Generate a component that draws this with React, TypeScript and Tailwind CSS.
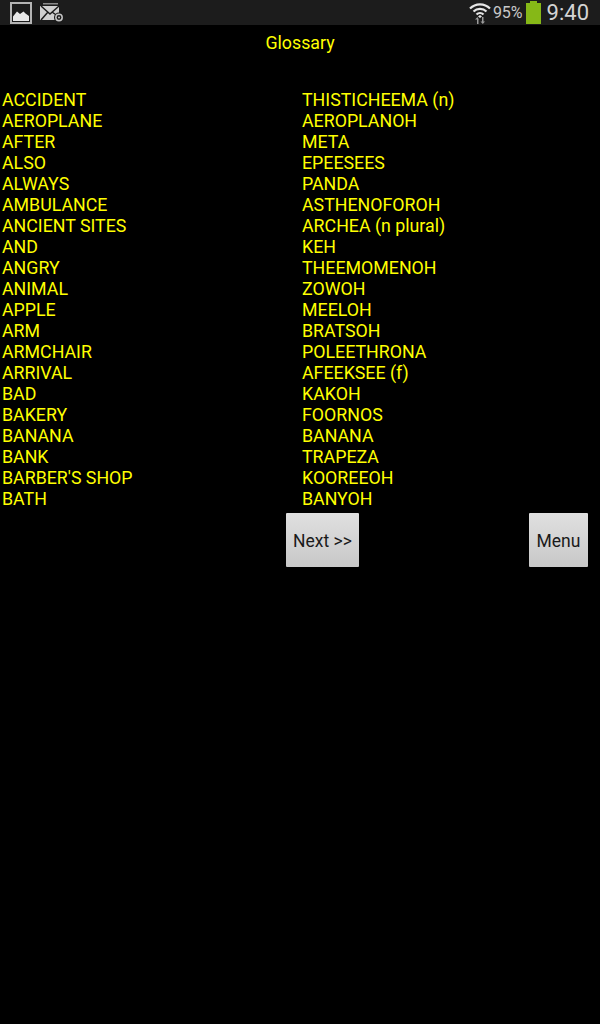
const WORDS: [string, string][] = [
  ['ACCIDENT', 'THISTICHEEMA (n)'],
  ['AEROPLANE', 'AEROPLANOH'],
  ['AFTER', 'META'],
  ['ALSO', 'EPEESEES'],
  ['ALWAYS', 'PANDA'],
  ['AMBULANCE', 'ASTHENOFOROH'],
  ['ANCIENT SITES', 'ARCHEA (n plural)'],
  ['AND', 'KEH'],
  ['ANGRY', 'THEEMOMENOH'],
  ['ANIMAL', 'ZOWOH'],
  ['APPLE', 'MEELOH'],
  ['ARM', 'BRATSOH'],
  ['ARMCHAIR', 'POLEETHRONA'],
  ['ARRIVAL', 'AFEEKSEE (f)'],
  ['BAD', 'KAKOH'],
  ['BAKERY', 'FOORNOS'],
  ['BANANA', 'BANANA'],
  ['BANK', 'TRAPEZA'],
  ["BARBER'S SHOP", 'KOOREEOH'],
  ['BATH', 'BANYOH'],
];

function StatusBar() {
  return (
    <div className="flex h-[25px] items-center justify-between bg-[#1c1c1c] pl-[10px] pr-[11px]">
      <div className="flex items-center gap-[8px]">
        {/* gallery icon */}
        <svg width="22" height="22" viewBox="0 0 22 22">
          <rect x="1" y="1" width="20" height="20" fill="#1c1c1c" stroke="#b4b4b4" strokeWidth="2" />
          <path d="M3 19V14.5L7 9.5L10 12L13.5 9.5L15.5 11.5L19 14V19Z" fill="#e8e8e8" />
        </svg>
        {/* mail icon */}
        <svg width="25" height="20" viewBox="0 0 25 20">
          <path d="M3 0H18V1.5H3Z" fill="#8a8a8a" />
          <path d="M0 3H19V17H0Z" fill="#d0d0d0" />
          <path d="M1 3L10 11L19 3M1 17L8 9M19 14L12 9" fill="none" stroke="#1c1c1c" strokeWidth="1.5" />
          <circle cx="19" cy="14.5" r="5" fill="#1c1c1c" />
          <circle cx="19" cy="14.5" r="3.2" fill="none" stroke="#c4c4c4" strokeWidth="1.5" />
          <circle cx="19" cy="14.5" r="1" fill="#c4c4c4" />
        </svg>
      </div>
      <div className="flex items-center font-['Roboto',sans-serif] text-[#c8c8c8]">
        {/* wifi icon */}
        <svg width="22" height="23" viewBox="0 0 22 23" className="mr-[2px]">
          <path d="M1 7.5A14 14 0 0 1 21 7.5" fill="none" stroke="#e4e4e4" strokeWidth="2.2" />
          <path d="M4.5 10.5A9.5 9.5 0 0 1 17.5 10.5" fill="none" stroke="#e4e4e4" strokeWidth="2.2" />
          <path d="M7.5 13.5A5 5 0 0 1 14.5 13.5" fill="none" stroke="#e4e4e4" strokeWidth="2.2" />
          <path d="M9 15.5L11 14L13 15.5L11 17Z" fill="#e4e4e4" />
          <path d="M8 23V18.5H6L8.5 16L9.8 18.5H9.5V23ZM13 16H14.5V20.5H16L13.8 23L11.5 20.5H13Z" fill="#9a9a9a" />
        </svg>
        <span className="text-[16px] leading-[25px]">95%</span>
        <div className="ml-[3px] flex h-[23px] w-[15px] flex-col items-center">
          <div className="h-[2px] w-[7px] bg-[#86b817]" />
          <div className="w-full flex-1 bg-[#86b817]" />
        </div>
        <span className="ml-[6px] text-[22px] leading-[25px] text-[#d4d4d4]">9:40</span>
      </div>
    </div>
  );
}

function GreyButton({ label, className }: { label: string; className: string }) {
  return (
    <button className={`flex h-[54px] items-center justify-center rounded-[1px] bg-gradient-to-b from-[#e0e0e0] to-[#c8c8c8] pt-[3px] text-[17.5px] text-[#1a1a1a] ${className}`}>
      {label}
    </button>
  );
}

export default function App() {
  return (
    <div className="h-[1024px] w-[600px] overflow-hidden bg-black font-['Roboto',sans-serif] text-[17.8px] leading-[21px] text-[#ffff00]">
      <StatusBar />
      <div className="pt-[7px] text-center">Glossary</div>
      <div className="mt-[36px] flex flex-col">
        {WORDS.map(([en, gr]) => (
          <div key={en} className="grid grid-cols-2">
            <span className="pl-[2px]">{en}</span>
            <span className="pl-[2px]">{gr}</span>
          </div>
        ))}
      </div>
      <div className="mt-[4px] flex justify-between pl-[286px] pr-[12px]">
        <GreyButton label="Next >>" className="w-[73px]" />
        <GreyButton label="Menu" className="w-[59px]" />
      </div>
    </div>
  );
}
